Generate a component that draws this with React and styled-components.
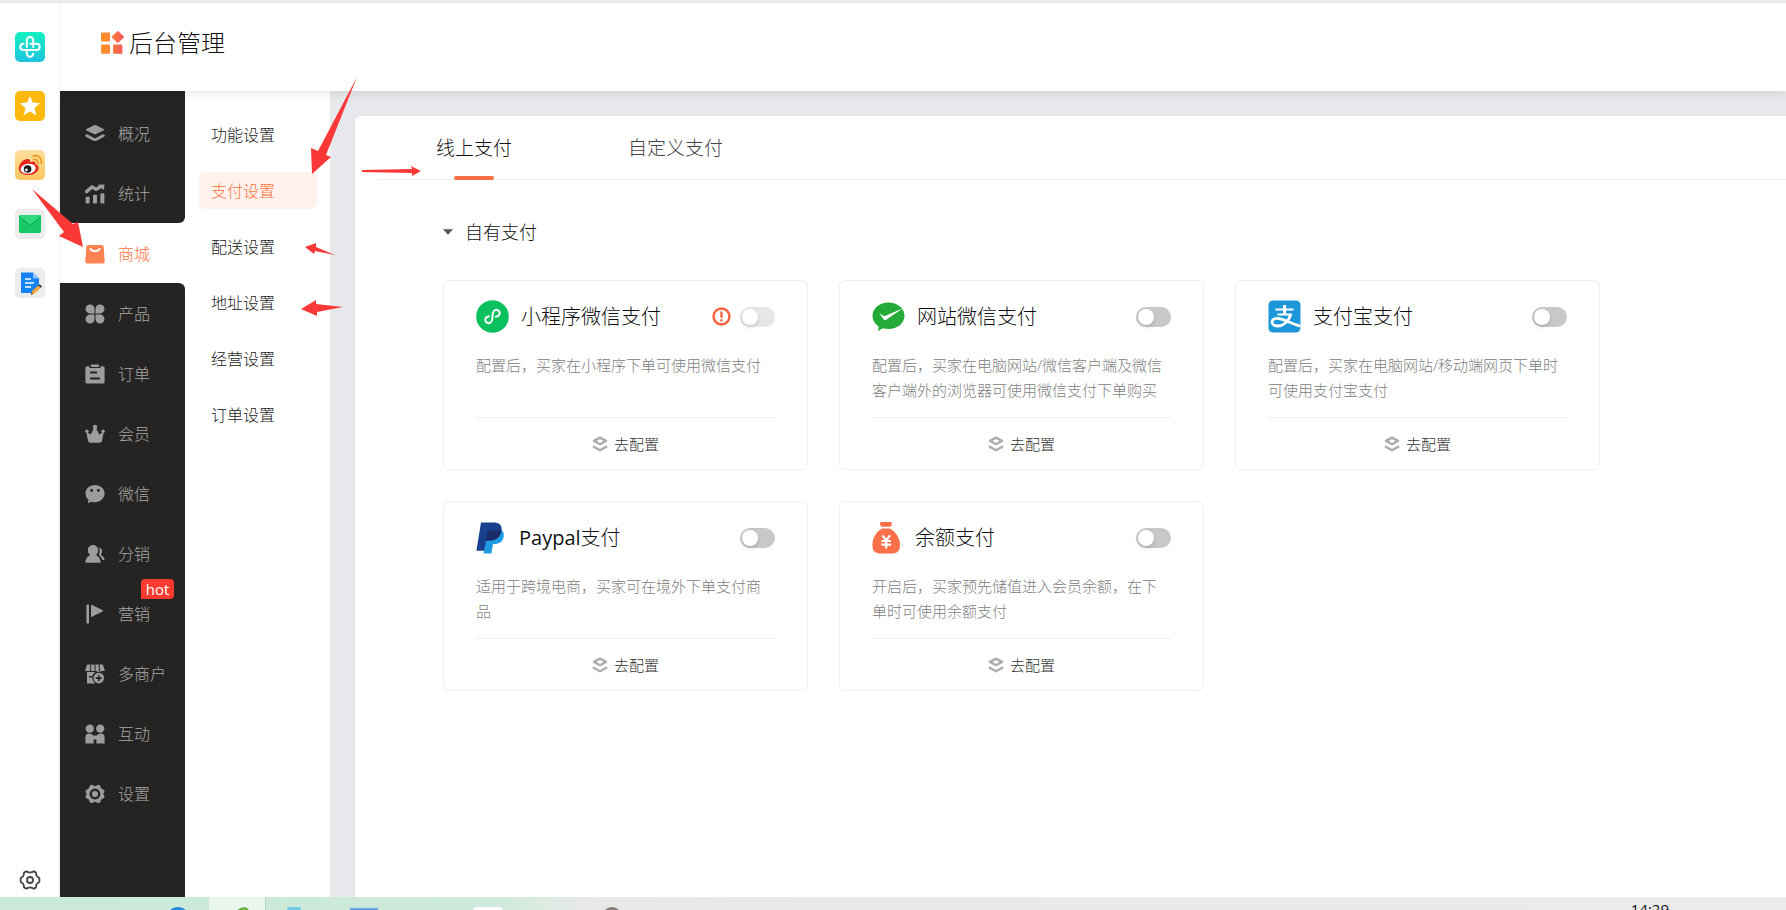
import React from "react";
import styled, { createGlobalStyle, css } from "styled-components";

const Global = createGlobalStyle`
  *, *::before, *::after { box-sizing: border-box; }
  body {
    margin: 0;
    background: #fff;
    color: #333;
    font-family: "Open Sans", "Noto Sans CJK SC", sans-serif;
    font-weight: 300;
    font-size: 16px;
  }
  button { font: inherit; color: inherit; background: none; border: 0; padding: 0; cursor: pointer; }
  a { color: inherit; text-decoration: none; }
  h1, h2, h3, p, ul { margin: 0; padding: 0; font-weight: inherit; list-style: none; }
  svg { display: block; flex: none; }
`;

const Screen = styled.div`
  position: relative;
  display: flex;
  flex-direction: column;
  height: 100vh;
  overflow: hidden;
`;

const Workspace = styled.div`
  display: flex;
  flex: 1;
  min-height: 0;
  border-top: 3px solid #ebebeb;
`;

const Rail = styled.aside`
  display: flex;
  flex-direction: column;
  justify-content: space-between;
  align-items: center;
  width: 60px;
  padding: 29px 0 2px;
  border-right: 1px solid #f0f0f0;
`;

const RailList = styled.div`
  display: flex;
  flex-direction: column;
  gap: 29px;
`;

const RailButton = styled.button`
  display: flex;
  width: 30px;
  height: 30px;
  align-items: center;
  justify-content: center;
  border-radius: 5px;
  overflow: hidden;
  background: ${(p) => p.$bg || "transparent"};
`;

const Console = styled.div`
  display: flex;
  flex-direction: column;
  flex: 1;
  min-width: 0;
  overflow: hidden;
`;

const Header = styled.header`
  position: relative;
  z-index: 1;
  display: flex;
  align-items: center;
  gap: 5px;
  height: 88px;
  padding: 0 40px 8px;
  background: #fff;
  box-shadow: 0 2px 10px rgba(0, 0, 0, 0.1);
`;

const Title = styled.h1`
  font-size: 24px;
  line-height: 32px;
  color: #111;
`;

const Body = styled.div`
  display: flex;
  flex: 1;
  min-height: 0;
  background: #e7e8ec;
`;

const Nav = styled.nav`
  display: flex;
  flex-direction: column;
  width: 125px;
  background: #fff;

  &::before {
    content: "";
    height: 12px;
    background: #252422;
  }
  &::after {
    content: "";
    flex: 1;
    background: #252422;
  }
`;

const NavItem = styled.a`
  position: relative;
  display: flex;
  align-items: center;
  gap: 13px;
  height: 60px;
  padding: 2px 0 0 25px;
  line-height: 24px;
  background: #252422;
  color: #a9a8a7;
  border-radius: ${(p) => (p.$edge === "above" ? "0 0 6px 0" : p.$edge === "below" ? "0 6px 0 0" : "0")};
  ${(p) =>
    p.$active &&
    css`
      background: #fff;
      color: #fa7440;
    `}

  svg {
    color: ${(p) => (p.$active ? "#fb8350" : "#9d9c9b")};
  }
`;

const Badge = styled.span`
  position: absolute;
  top: -4px;
  right: 11px;
  width: 33px;
  height: 20px;
  border-radius: 4px 4px 4px 0;
  background: #fb3a30;
  color: #fff;
  font-size: 15px;
  font-weight: 400;
  line-height: 20px;
  text-align: center;
`;

const SubNav = styled.nav`
  display: flex;
  flex-direction: column;
  gap: 19px;
  width: 145px;
  padding: 25px 13px 0 14px;
  background: #fff;
`;

const SubItem = styled.a`
  height: 37px;
  padding-left: 12px;
  border-radius: 6px;
  line-height: 39px;
  background: ${(p) => (p.$active ? "#fff2ed" : "transparent")};
  color: ${(p) => (p.$active ? "#fa7440" : "#222")};
`;

const Panel = styled.main`
  flex: 1;
  min-width: 0;
  margin: 25px 0 0 25px;
  border-radius: 6px 0 0 0;
  background: #fff;
`;

const Tabs = styled.div`
  display: flex;
  height: 64px;
  margin-left: 23px;
  border-bottom: 1px solid #eee;
`;

const Tab = styled.button`
  position: relative;
  height: 64px;
  padding: 0 58px;
  font-size: 19px;
  line-height: 64px;
  color: ${(p) => (p.$active ? "#111" : "#444")};

  &::after {
    content: "";
    position: absolute;
    left: 50%;
    bottom: 0;
    width: 40px;
    height: 4px;
    margin-left: -20px;
    border-radius: 2px;
    background: ${(p) => (p.$active ? "#fa7048" : "transparent")};
  }
`;

const Section = styled.section`
  padding: 37px 64px 0 88px;
`;

const SectionToggle = styled.button`
  display: flex;
  align-items: center;
  gap: 12px;
  height: 30px;
  font-size: 18px;
  line-height: 30px;
  color: #111;
`;

const Cards = styled.div`
  display: grid;
  grid-template-columns: repeat(auto-fill, 365px);
  gap: 31px;
  margin-top: 33px;
`;

const Card = styled.article`
  padding: 19px 32px 0;
  border: 1px solid #efefef;
  border-radius: 6px;
`;

const CardHead = styled.div`
  display: flex;
  align-items: center;
  gap: 12px;
  height: 33px;
`;

const CardTitle = styled.h3`
  flex: 1;
  font-size: 20px;
  line-height: 32px;
  color: #111;
`;

const Latin = styled.span`
  font-weight: 400;
`;

const CardText = styled.p`
  height: 50px;
  margin: 20px 0 14px;
  font-size: 15px;
  line-height: 25px;
  color: #808080;
`;

const CardAction = styled.button`
  display: flex;
  align-items: center;
  justify-content: center;
  gap: 6px;
  width: 100%;
  height: 52px;
  border-top: 1px solid #eee;
  font-size: 15px;
  color: #333;
`;

const Controls = styled.div`
  display: flex;
  align-items: center;
  gap: 9px;
`;

const Switch = styled.input`
  appearance: none;
  display: flex;
  align-items: center;
  width: 35px;
  height: 20px;
  margin: 0;
  padding: 2px;
  border-radius: 10px;
  background: ${(p) => (p.disabled ? "#e6e6e6" : "#c8c8c8")};

  &::before {
    content: "";
    width: 16px;
    height: 16px;
    border-radius: 50%;
    background: #fff;
    box-shadow: 0 2px 4px rgba(0, 0, 0, 0.15);
  }
  &:checked {
    justify-content: flex-end;
    background: #fa7048;
  }
`;

const Taskbar = styled.footer`
  display: flex;
  height: 13px;
  padding-left: 147px;
  overflow: hidden;
  background: linear-gradient(90deg, #cae9d8 0, #cdeadb 490px, #dcebe2 545px, #e9e9e9 590px, #ebebeb 100%);
`;

const Task = styled.button`
  display: flex;
  justify-content: center;
  align-items: flex-start;
  width: ${(p) => (p.$active ? "57px" : "62px")};
  height: 44px;
  margin-right: ${(p) => (p.$active ? "5px" : "0")};
  padding-top: 10px;
  border-right: 1px solid ${(p) => (p.$active ? "#b4d3c1" : "transparent")};
  background: ${(p) => (p.$active ? "#e9f6ee" : "transparent")};
`;

const Clock = styled.time`
  margin-left: auto;
  padding: 2px 117px 0 0;
  font-size: 15px;
  font-weight: 400;
  line-height: 20px;
  color: #111;
`;

const Marks = styled.svg`
  position: absolute;
  left: 0;
  top: 0;
  z-index: 2;
  pointer-events: none;
`;

const NavIcon = ({ children }) => (
  <svg width="20" height="20" viewBox="0 0 20 20" fill="currentColor" aria-hidden="true">
    {children}
  </svg>
);

const navItems = [
  {
    label: "概况",
    icon: (
      <>
        <path d="M9 1.3Q10 .8 11 1.3L18.6 4.9Q19.7 5.7 18.6 6.5L11 10.1Q10 10.6 9 10.1L1.4 6.5Q.3 5.7 1.4 4.9Z" />
        <path d="M1.6 11.6L9 15.4Q10 15.9 11 15.4L18.4 11.6" fill="none" stroke="currentColor" strokeWidth="2.8" strokeLinecap="round" />
      </>
    ),
  },
  {
    label: "统计",
    icon: (
      <>
        <path d="M1.6 7.6L7.2 2.8L11 5.4L16 2.6" fill="none" stroke="currentColor" strokeWidth="3.4" strokeLinejoin="round" strokeLinecap="round" />
        <path d="M12.6 .8L19.4 .6L19 6.2Z" />
        <rect x=".6" y="12.8" width="4" height="6.8" rx="1" />
        <rect x="8" y="10.8" width="4" height="8.8" rx="1" />
        <rect x="15.4" y="9.2" width="4" height="10.4" rx="1" />
      </>
    ),
  },
  {
    label: "商城",
    icon: (
      <>
        <path d="M3.2 1H16.8Q18.4 1 18.6 2.6L19.7 17Q19.8 19.4 17.6 19.4H2.4Q.2 19.4 .3 17L1.4 2.6Q1.6 1 3.2 1Z" />
        <path d="M5.4 5Q10 9.6 14.6 5" fill="none" stroke="#fff" strokeWidth="2" strokeLinecap="round" />
      </>
    ),
  },
  {
    label: "产品",
    icon: (
      <>
        <path d="M5 .4A4.6 4.6 0 0 1 9.5 5V9.4H5A4.5 4.5 0 0 1 5 .4Z" />
        <path d="M15 .4A4.6 4.6 0 0 0 10.5 5V9.4H15A4.5 4.5 0 0 0 15 .4Z" />
        <path d="M5 19.6A4.6 4.6 0 0 0 9.5 15V10.6H5A4.5 4.5 0 0 0 5 19.6Z" />
        <path d="M15 19.6A4.6 4.6 0 0 1 10.5 15V10.6H15A4.5 4.5 0 0 1 15 19.6Z" />
      </>
    ),
  },
  {
    label: "订单",
    icon: (
      <>
        <path fillRule="evenodd" d="M2 2.2H4.4V4H15.6V2.2H18Q19.6 2.2 19.6 3.8V18Q19.6 19.6 18 19.6H2Q.4 19.6 .4 18V3.8Q.4 2.2 2 2.2ZM5 7.4V9.4H12V7.4ZM5 13.4V15.4H15V13.4Z" />
        <rect x="5.8" y=".4" width="8.4" height="2.6" rx="1" />
      </>
    ),
  },
  {
    label: "会员",
    icon: (
      <>
        <circle cx="10" cy="3" r="2.2" />
        <circle cx="1.9" cy="7.2" r="1.7" />
        <circle cx="18.1" cy="7.2" r="1.7" />
        <path d="M1.2 7.8L5.8 10.4L9 4H11L14.2 10.4L18.8 7.8L17 16.8Q16.6 18.8 14.6 18.8H5.4Q3.4 18.8 3 16.8Z" />
      </>
    ),
  },
  {
    label: "微信",
    icon: (
      <path
        fillRule="evenodd"
        d="M10 1C15.4 1 19.6 4.8 19.6 9.6S15.4 18.2 10 18.2Q8 18.2 6.4 17.7L3 19.2L3.4 16Q.4 13.4 .4 9.6C.4 4.8 4.6 1 10 1ZM6.6 5A1.4 1.4 0 1 0 6.6 7.9A1.4 1.4 0 1 0 6.6 5ZM13.4 5A1.4 1.4 0 1 0 13.4 7.9A1.4 1.4 0 1 0 13.4 5Z"
      />
    ),
  },
  {
    label: "分销",
    icon: (
      <>
        <path d="M8 1C11 1 13.2 3.3 13.2 6.2Q13.2 9 11.4 10.6V11.6C14 12.8 15.6 15 15.8 18.8H.3C.4 15 2 12.8 4.8 11.6V10.6Q2.8 9 2.8 6.2C2.8 3.3 5 1 8 1Z" />
        <path d="M14 3.6C17.4 4.8 18 8 16 10.4L16.2 11.2C18.2 12 19.4 13.6 19.6 16H17.4Q16.6 12.8 14 11.2Q15.6 7.4 14 3.6Z" />
      </>
    ),
  },
  {
    label: "营销",
    badge: "hot",
    icon: (
      <>
        <rect x="1.4" y=".4" width="2.6" height="19.2" rx=".6" />
        <path d="M6 1.4Q6 .4 7 .9L17.6 6Q18.6 6.8 17.6 7.6L7 12.8Q6 13.2 6 12.2Z" />
      </>
    ),
  },
  {
    label: "多商户",
    icon: (
      <>
        <path d="M2.2 .6H5.4L5 7H.4V5.6ZM6.4 .6H9.5V7H6ZM10.5 .6H13.6L14 7H10.5ZM14.6 .6H17.8L19.6 5.6V7H15Z" />
        <path d="M2 8H17.6V8.6A6 6 0 0 0 9.6 18.6L10 19.6H2ZM4 12V13.4H7.4V12Z" fillRule="evenodd" />
        <path fillRule="evenodd" d="M13.8 8.8A5.3 5.3 0 1 0 13.8 19.4A5.3 5.3 0 1 0 13.8 8.8ZM13 11.2H14.6V13.3H16.8V14.9H14.6V17H13V14.9H10.8V13.3H13Z" />
      </>
    ),
  },
  {
    label: "互动",
    icon: (
      <>
        <circle cx="4.8" cy="4.6" r="4.2" />
        <circle cx="15.2" cy="4.6" r="4.2" />
        <path d="M.4 19.4V13Q.6 10 4 9.6Q7 9.6 8.2 11.6H11.8Q13 9.6 16 9.6Q19.4 10 19.6 13V19.4H11.4V15.4H8.6V19.4Z" />
      </>
    ),
  },
  {
    label: "设置",
    icon: (
      <path
        fillRule="evenodd"
        d="M6.6 .8L10 2.2L13.4 .8L15 1.6L16.2 4.6L19 6L19.6 7.6L18.3 10L19.6 12.4L19 14L16.2 15.4L15 18.4L13.4 19.2L10 17.8L6.6 19.2L5 18.4L3.8 15.4L1 14L.4 12.4L1.7 10L.4 7.6L1 6L3.8 4.6L5 1.6ZM10 4.6A5.4 5.4 0 1 0 10 15.4A5.4 5.4 0 1 0 10 4.6ZM10 6.9A3.1 3.1 0 1 1 10 13.1A3.1 3.1 0 1 1 10 6.9Z"
      />
    ),
  },
];

const subItems = ["功能设置", "支付设置", "配送设置", "地址设置", "经营设置", "订单设置"];

const MiniProgramIcon = () => (
  <svg width="33" height="33" viewBox="0 0 33 33" aria-hidden="true">
    <circle cx="16.5" cy="16.5" r="16.3" fill="#0bc15f" />
    <path
      d="M13 16.2C10.2 16.6 8.8 18.6 9.4 20.8C10.2 23.6 13.4 23.8 15.2 21.8C16.4 20.4 16.4 19.4 16.5 16.5C16.6 13.6 16.6 12.6 17.8 11.2C19.6 9.2 22.8 9.4 23.6 12.2C24.2 14.4 22.8 16.4 20 16.8"
      fill="none"
      stroke="#fff"
      strokeWidth="2"
      strokeLinecap="round"
    />
  </svg>
);

const WechatPayIcon = () => (
  <svg width="33" height="33" viewBox="0 0 33 33" aria-hidden="true">
    <path d="M16.5 2.5C25.4 2.5 32.5 8.4 32.5 15.8S25.4 29 16.5 29Q13.4 29 11 28.2L6 31L6.6 26.4Q.5 22.4 .5 15.8C.5 8.4 7.6 2.5 16.5 2.5Z" fill="#24ab38" />
    <path d="M7.4 13.6L12.4 16.2L31 8.2L14.2 19.8Q12.6 20.6 11.6 19.2Z" fill="#fff" />
  </svg>
);

const AlipayIcon = () => (
  <svg width="33" height="33" viewBox="0 0 33 33" aria-hidden="true">
    <rect x=".5" y=".5" width="32" height="32" rx="4.5" fill="#1c97da" />
    <g fill="none" stroke="#fff">
      <path d="M7.4 9.6H25.6M9.4 14.4H23.8" strokeWidth="2" />
      <path d="M16.6 5V14.6" strokeWidth="3" />
      <path d="M22.8 14.2C21 21.4 15 26.4 9 26C2.6 25.4 2.6 19.2 8.4 18.4C14.4 17.8 21 23.2 32.5 26.2" strokeWidth="2.8" />
    </g>
  </svg>
);

const PaypalIcon = () => (
  <svg width="31" height="33" viewBox="0 0 31 33" aria-hidden="true">
    <path d="M11 9H25.4C28.6 11 28.4 16 26.4 19.2C24.4 22.4 21 23 17 23L15.4 32.4H7.6Z" fill="#1d9be0" />
    <path d="M5 1.4H18.4C24 1.4 26.6 5 25.4 10.4C24 16.4 19.8 19.4 14 19.4H10.2L8.2 29.8H.4Z" fill="#17408f" />
    <path d="M11.6 9.6H25.5C24.2 16.4 19.8 19.4 14 19.4H10Z" fill="#1b2a68" />
  </svg>
);

const BalanceIcon = () => (
  <svg width="31" height="33" viewBox="0 0 31 33" aria-hidden="true">
    <path d="M8.4 1H19.4Q20.4 4.4 18.4 5.8H9.8Q7.4 4.4 8.4 1Z" fill="#fb7048" />
    <path d="M10 7.6H18C24 11 28 17.6 28 24Q28 32.4 21 32.4H7Q.4 32.4 .4 24C.4 17.6 4 11 10 7.6Z" fill="#fb7048" />
    <path d="M10.4 14.4L14.2 19.2L18 14.4M14.2 19.2V27.4M9.4 20H19M9.4 23.6H19" fill="none" stroke="#fff" strokeWidth="2.2" />
  </svg>
);

const methods = [
  { title: "小程序微信支付", icon: <MiniProgramIcon />, warn: true, text: "配置后，买家在小程序下单可使用微信支付" },
  { title: "网站微信支付", icon: <WechatPayIcon />, text: "配置后，买家在电脑网站/微信客户端及微信客户端外的浏览器可使用微信支付下单购买" },
  { title: "支付宝支付", icon: <AlipayIcon />, text: "配置后，买家在电脑网站/移动端网页下单时可使用支付宝支付" },
  { brand: "Paypal", title: "支付", icon: <PaypalIcon />, text: "适用于跨境电商，买家可在境外下单支付商品" },
  { title: "余额支付", icon: <BalanceIcon />, text: "开启后，买家预先储值进入会员余额，在下单时可使用余额支付" },
];

const WarnIcon = () => (
  <svg width="19" height="19" viewBox="0 0 19 19" fill="none" stroke="#f8623f" strokeWidth="2.4" aria-hidden="true">
    <circle cx="9.5" cy="9.5" r="8" />
    <path d="M9.5 4.6V10.8M9.5 12.2V14.6" />
  </svg>
);

const StackIcon = () => (
  <svg width="16" height="16" viewBox="0 0 16 16" fill="none" stroke="#adadad" strokeWidth="2.4" strokeLinejoin="round" aria-hidden="true">
    <path d="M8 1.6L14 4.9L8 8.2L2 4.9Z" />
    <path d="M1 10.4L8 14.2L15 10.4" />
  </svg>
);

function PaymentCard({ method }) {
  return (
    <Card>
      <CardHead>
        {method.icon}
        <CardTitle>
          {method.brand && <Latin>{method.brand}</Latin>}
          {method.title}
        </CardTitle>
        <Controls>
          {method.warn && <WarnIcon />}
          <Switch type="checkbox" role="switch" disabled={method.warn} aria-label={(method.brand || "") + method.title} />
        </Controls>
      </CardHead>
      <CardText>{method.text}</CardText>
      <CardAction type="button">
        <StackIcon />
        去配置
      </CardAction>
    </Card>
  );
}

const railItems = [
  {
    label: "Health",
    bg: "linear-gradient(180deg, #15f0c0, #1fc3e0)",
    icon: (
      <svg width="30" height="30" viewBox="0 0 30 30" fill="none" stroke="#fff" strokeWidth="2" strokeLinecap="round">
        <path d="M14.6 18H8.4A3.1 3.1 0 0 1 8.4 11.8M11.8 15V8.2A3.2 3.2 0 0 1 18.2 8.2V15M15.4 11.8H21.6A3.1 3.1 0 0 1 21.6 18H15.4M11.8 18V21.6A3.2 3.2 0 0 0 18.2 21.6" />
      </svg>
    ),
  },
  {
    label: "Favorites",
    bg: "#ffb80c",
    icon: (
      <svg width="30" height="30" viewBox="0 0 30 30">
        <path d="M15 5L17.8 11.6L25 12.2L19.6 17L21.2 24.2L15 20.4L8.8 24.2L10.4 17L5 12.2L12.2 11.6Z" fill="#fff" />
      </svg>
    ),
  },
  {
    label: "Weibo",
    bg: "linear-gradient(180deg, #fde0a0, #fbc55e)",
    icon: (
      <svg width="30" height="30" viewBox="0 0 30 30">
        <path d="M12 9C8 9.6 3.8 14 3.8 18.4C3.8 22.6 8.6 25 13.4 25C19.4 25 23.6 21.4 23.6 18C23.6 15.6 22 14.6 20.4 14.2C21 11.4 19 11 15.2 12.2C15.6 9.8 14.4 8.8 12 9Z" fill="#e4251c" />
        <ellipse cx="13.2" cy="18.8" rx="7.6" ry="5" fill="#fff" transform="rotate(-8 13 19)" />
        <circle cx="12.6" cy="19" r="3.8" fill="#161616" />
        <circle cx="11.4" cy="20" r="1.4" fill="#fff" />
        <path d="M18.6 9.4Q23.2 8.8 22.8 13.6M18.2 5.8Q26.8 4.8 26.4 13" fill="none" stroke="#eb9a1d" strokeWidth="1.8" strokeLinecap="round" />
      </svg>
    ),
  },
  {
    label: "Mail",
    bg: "#ececec",
    icon: (
      <svg width="30" height="30" viewBox="0 0 30 30">
        <rect x="4" y="6" width="22" height="18" rx="1.4" fill="#17c765" />
        <path d="M4 7.4Q4 6 5.4 6H24.6Q26 6 26 7.4L15 16.4Z" fill="#2fd97c" />
        <path d="M4 7.4L15 16.4L26 7.4" fill="none" stroke="#0da651" />
      </svg>
    ),
  },
  {
    label: "Notes",
    bg: "#ececec",
    icon: (
      <svg width="30" height="30" viewBox="0 0 30 30">
        <path d="M6 4.6H18L24 10.6V18L18 25H6Z" fill="#1583f3" />
        <path d="M18 4.6L24 10.6H18Z" fill="#8cc4fb" />
        <path d="M10 11H16M10 15H19M10 19H16" stroke="#fff" strokeWidth="1.6" />
        <path d="M16 26.6L17 23L23.4 17.4L25.8 19.8L19.4 25.6Z" fill="#f7a33c" />
        <path d="M23.4 17.4L24.6 16.6Q26.8 17.4 26.6 19L25.8 19.8Z" fill="#222" />
        <path d="M16 26.6L16.6 24.6L18.2 26Z" fill="#222" />
      </svg>
    ),
  },
];

export default function App() {
  const active = 2;
  return (
    <>
      <Global />
      <Screen>
        <Workspace>
          <Rail>
            <RailList>
              {railItems.map((item) => (
                <RailButton key={item.label} $bg={item.bg} aria-label={item.label}>
                  {item.icon}
                </RailButton>
              ))}
            </RailList>
            <RailButton aria-label="Settings">
              <svg width="22" height="22" viewBox="0 0 22 22" fill="none" stroke="#444" strokeWidth="1.8" strokeLinejoin="round">
                <path d="M7.4 2.2L9 3.2Q11 4 13 3.2L14.6 2.2L17 3.6L17.2 5.6Q17.6 7.4 19.2 8.2L20.4 9.2V12.8L19.2 13.8Q17.6 14.6 17.2 16.4L17 18.4L14.6 19.8L13 18.8Q11 18 9 18.8L7.4 19.8L5 18.4L4.8 16.4Q4.4 14.6 2.8 13.8L1.6 12.8V9.2L2.8 8.2Q4.4 7.4 4.8 5.6L5 3.6Z" />
                <circle cx="11" cy="11" r="3" />
              </svg>
            </RailButton>
          </Rail>
          <Console>
            <Header>
              <svg width="24" height="24" viewBox="0 0 24 24" aria-hidden="true">
                <defs>
                  <linearGradient id="brand" x1="0" y1="0" x2="24" y2="0" gradientUnits="userSpaceOnUse">
                    <stop offset="0" stopColor="#fd9127" />
                    <stop offset=".4" stopColor="#fc8433" />
                    <stop offset="1" stopColor="#fb5560" />
                  </linearGradient>
                </defs>
                <g fill="url(#brand)">
                  <rect x="1" y="1.4" width="9" height="9" rx="1" />
                  <rect x="1" y="13.4" width="9" height="9.4" rx="1" />
                  <rect x="13" y="13.4" width="9.4" height="9.4" rx="1" />
                  <path d="M17 .4Q17.8 -.3 18.6 .4L23.6 5.3Q24.3 6 23.6 6.8L18.6 11.6Q17.8 12.3 17 11.6L12 6.8Q11.3 6 12 5.3Z" />
                </g>
              </svg>
              <Title>后台管理</Title>
            </Header>
            <Body>
              <Nav>
                {navItems.map((item, i) => (
                  <NavItem
                    key={item.label}
                    href="#"
                    $active={i === active}
                    $edge={i === active - 1 ? "above" : i === active + 1 ? "below" : undefined}
                  >
                    <NavIcon>{item.icon}</NavIcon>
                    {item.label}
                    {item.badge && <Badge>{item.badge}</Badge>}
                  </NavItem>
                ))}
              </Nav>
              <SubNav>
                {subItems.map((label, i) => (
                  <SubItem key={label} href="#" $active={i === 1}>
                    {label}
                  </SubItem>
                ))}
              </SubNav>
              <Panel>
                <Tabs role="tablist">
                  <Tab role="tab" aria-selected="true" $active>
                    线上支付
                  </Tab>
                  <Tab role="tab" aria-selected="false">
                    自定义支付
                  </Tab>
                </Tabs>
                <Section>
                  <SectionToggle aria-expanded="true">
                    <svg width="10" height="6" viewBox="0 0 10 6" aria-hidden="true">
                      <path d="M0 .2H10L5 5.8Z" fill="#555" />
                    </svg>
                    自有支付
                  </SectionToggle>
                  <Cards>
                    {methods.map((m) => (
                      <PaymentCard key={m.text} method={m} />
                    ))}
                  </Cards>
                </Section>
              </Panel>
            </Body>
          </Console>
        </Workspace>
        <Taskbar>
          <Task aria-label="Browser">
            <svg width="24" height="24" viewBox="0 0 24 24">
              <circle cx="12" cy="12" r="12" fill="#2389d8" />
            </svg>
          </Task>
          <Task $active aria-label="Secure browser">
            <svg width="24" height="24" viewBox="0 0 24 24">
              <path d="M10 8Q14 1 20 1.4Q23 2 23 6" fill="none" stroke="#5fae38" strokeWidth="2.4" />
            </svg>
          </Task>
          <Task aria-label="Files">
            <svg width="30" height="24" viewBox="0 0 30 24">
              <rect width="14" height="24" rx="3" fill="#6fcdea" />
            </svg>
          </Task>
          <Task aria-label="Desktop">
            <svg width="30" height="24" viewBox="0 0 30 24">
              <rect x="1" y="1" width="28" height="22" fill="#4f97dd" stroke="#a8cdf0" />
            </svg>
          </Task>
          <Task aria-label="Editor" />
          <Task aria-label="Notes">
            <svg width="30" height="24" viewBox="0 0 30 24">
              <rect width="30" height="24" rx="4" fill="#fff" />
            </svg>
          </Task>
          <Task aria-label="Media" />
          <Task aria-label="Profile">
            <svg width="20" height="20" viewBox="0 0 20 20">
              <circle cx="10" cy="10" r="10" fill="#857a78" />
            </svg>
          </Task>
          <Clock>14:29</Clock>
        </Taskbar>
        <Marks width="440" height="330" viewBox="0 0 440 330" fill="#fb3838" aria-hidden="true">
          <path d="M357 77L326 155L331 157L312 174L311 148L318 151Z" />
          <path d="M32 189L73 224L78 222L83 247L59 236L64 232Z" />
          <path d="M335 255L315 251L314 254L305 247L316 243L316 247Z" />
          <path d="M301 309L316 300V304L343 307L317 312V316Z" />
          <path d="M362 170L412 169L411 166L421 171L412 176V173L362 172Z" />
        </Marks>
      </Screen>
    </>
  );
}
